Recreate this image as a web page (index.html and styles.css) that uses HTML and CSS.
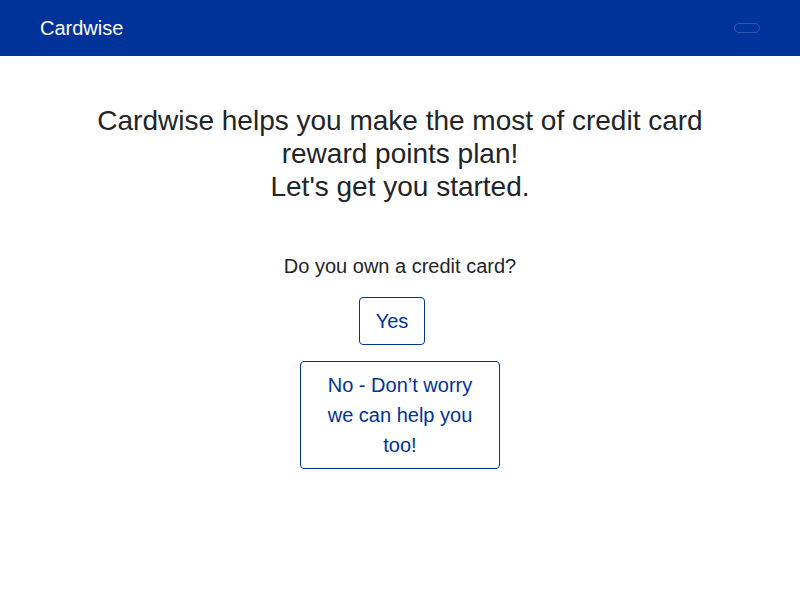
FILE: index.html
```html
<!DOCTYPE html>
<html>
<head>
<meta charset="utf-8">
<title>Cardwise</title>
<link rel="stylesheet" href="styles.css">
</head>
<body>
<nav class="navbar">
  <span class="brand">Cardwise</span>
  <button class="toggler" aria-label="Toggle navigation"></button>
</nav>
<main class="main">
  <h3 class="headline">Cardwise helps you make the most of credit card reward points plan!<br>Let's get you started.</h3>
  <p class="question">Do you own a credit card?</p>
  <div class="choices">
    <button class="choice choice-yes">Yes</button>
    <button class="choice choice-wide">No - Don’t worry we can help you too!</button>
  </div>
</main>
</body>
</html>
```

FILE: styles.css
```css
* { box-sizing: border-box; }
body {
  margin: 0;
  font-family: "Liberation Sans", Arial, sans-serif;
  color: #212529;
  background: #fff;
}
.navbar {
  height: 56px;
  background: #003399;
  display: flex;
  align-items: center;
  justify-content: space-between;
  padding: 0 40px;
}
.brand {
  color: #fff;
  font-size: 20px;
  line-height: 30px;
}
.toggler {
  width: 26px;
  height: 10px;
  padding: 0;
  margin-right: 0;
  background: transparent;
  border: 1px solid rgba(255,255,255,0.18);
  border-radius: 5px;
}
.main {
  display: flex;
  flex-direction: column;
  align-items: center;
  padding-top: 48px;
}
.headline {
  margin: 0;
  width: 640px;
  text-align: center;
  font-weight: 400;
  font-size: 28px;
  line-height: 33px;
}
.question {
  margin: 48px 0 0;
  font-size: 20px;
  line-height: 30px;
}
.choices {
  margin-top: 16px;
  display: flex;
  flex-direction: column;
  align-items: center;
  gap: 16px;
}
.choice {
  font-family: "Liberation Sans", Arial, sans-serif;
  font-size: 20px;
  line-height: 30px;
  color: #003399;
  background: #fff;
  border: 1px solid #003399;
  border-radius: 4px;
  padding: 8px 16px;
}
.choice-yes {
  margin-right: 16px;
}
.choice-wide {
  width: 200px;
  padding: 8px 15px;
}
```
